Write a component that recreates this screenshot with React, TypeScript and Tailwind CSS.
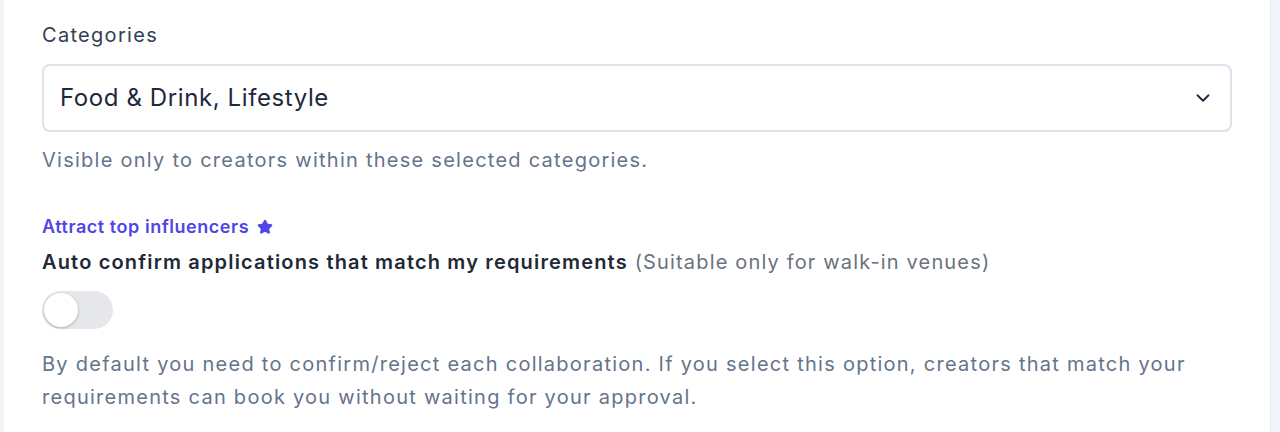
import { ChevronDown, Star } from "lucide-react";
import { useState } from "react";

export default function App() {
  const [autoConfirm, setAutoConfirm] = useState(false);

  return (
    <div
      className="flex h-[432px] w-full overflow-hidden bg-[#f1f4f9]"
      style={{ fontFamily: "Inter, 'Noto Sans', sans-serif" }}
    >
      <div className="ml-1 flex-1 bg-white border-r border-[#e6eaf1] pl-[38px] pr-[38px] pt-[22px]">
        {/* Categories */}
        <label className="block text-[20px] leading-[26px] tracking-[0.065em] text-[#334155]">
          Categories
        </label>
        <button
          type="button"
          className="mt-[16px] flex h-[68px] w-full items-center justify-between rounded-lg border-2 border-[#dde3ec] bg-white pl-[16px] pr-[16px] text-left"
        >
          <span className="text-[24px] tracking-[0.025em] text-[#1e293b]">Food &amp; Drink, Lifestyle</span>
          <ChevronDown className="h-[22px] w-[22px] text-[#1e293b]" strokeWidth={2} />
        </button>
        <p className="mt-[14px] text-[20px] leading-[28px] tracking-[0.063em] text-[#64748b]">
          Visible only to creators within these selected categories.
        </p>

        {/* Auto confirm */}
        <div className="mt-[41px] flex items-center gap-[8px] text-[18px] font-semibold leading-[24px] tracking-[0.03em] text-[#5046e5]">
          Attract top influencers
          <Star className="h-[16px] w-[16px] fill-[#5046e5]" strokeWidth={2} />
        </div>
        <p className="mt-[9px] text-[20px] leading-[28px] tracking-[0.058em] text-[#1f2937]">
          <span className="font-semibold">Auto confirm applications that match my requirements</span>{" "}
          <span className="text-[#6b7280]">(Suitable only for walk-in venues)</span>
        </p>
        <button
          type="button"
          onClick={() => setAutoConfirm(!autoConfirm)}
          className={`mt-[15px] flex h-[38px] w-[71px] items-center rounded-full p-[2px] ${
            autoConfirm ? "bg-[#5046e5]" : "bg-[#e5e7eb]"
          }`}
        >
          <span
            className={`h-[34px] w-[34px] rounded-full bg-white shadow-[0_1px_3px_rgba(0,0,0,0.25)] ${
              autoConfirm ? "translate-x-[33px]" : ""
            }`}
          />
        </button>
        <p className="mt-[19px] text-[20px] leading-[33px] tracking-[0.063em] text-[#64748b]">
          By default you need to confirm/reject each collaboration. If you select this option, creators that match your
          requirements can book you without waiting for your approval.
        </p>
      </div>
      <div className="w-[9px]" />
    </div>
  );
}
